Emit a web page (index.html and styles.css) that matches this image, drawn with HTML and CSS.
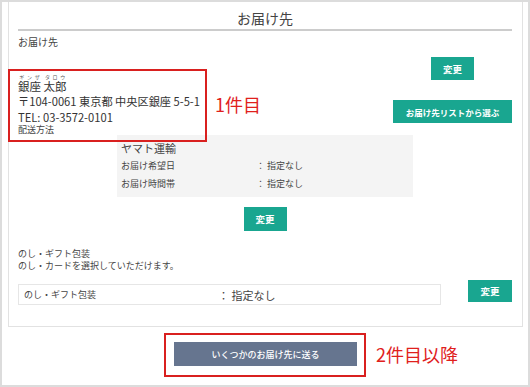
FILE: index.html
```html
<!DOCTYPE html>
<html lang="ja">
<head>
<meta charset="utf-8">
<title>お届け先</title>
<link rel="stylesheet" href="styles.css">
</head>
<body>
<div class="frame">
  <section class="card">
    <h2 class="card-title">お届け先</h2>
    <div class="label">お届け先</div>
    <div class="top-row">
      <div class="addr-wrap">
        <div class="addr">
          <div class="name"><ruby>銀座<rt>ギンザ</rt></ruby> <ruby>太郎<rt>タロウ</rt></ruby></div>
          <div class="line">〒104-0061 東京都 中央区銀座 5-5-1</div>
          <div class="line">TEL: 03-3572-0101</div>
          <div class="method">配送方法</div>
        </div>
        <div class="note">1件目</div>
      </div>
      <div class="btn-col">
        <button class="btn btn-small">変更</button>
        <button class="btn btn-list">お届け先リストから選ぶ</button>
      </div>
    </div>
    <div class="ship">
      <div class="ship-title">ヤマト運輸</div>
      <div class="ship-row"><span class="k">お届け希望日</span><span class="v">： 指定なし</span></div>
      <div class="ship-row"><span class="k">お届け時間帯</span><span class="v">： 指定なし</span></div>
    </div>
    <div class="center">
      <button class="btn btn-small btn-mid">変更</button>
    </div>
    <div class="gift-text">
      <div>のし・ギフト包装</div>
      <div>のし・カードを選択していただけます。</div>
    </div>
    <div class="gift-row">
      <div class="gift-box"><span class="gk">のし・ギフト包装</span><span class="gv">： 指定なし</span></div>
      <button class="btn btn-small btn-gift">変更</button>
    </div>
  </section>
  <div class="bottom">
    <div class="multi-box">
      <button class="btn-multi">いくつかのお届け先に送る</button>
    </div>
    <div class="note note2">2件目以降</div>
  </div>
</div>
</body>
</html>
```

FILE: styles.css
```css
* { box-sizing: border-box; }
html, body { margin: 0; padding: 0; background: #fff; }
body {
  font-family: "Noto Sans CJK JP", "Noto Sans", sans-serif;
  color: #444;
}
.frame {
  width: 530px;
  height: 387px;
  border: 2px solid #dcdcdc;
  display: flex;
  flex-direction: column;
}
.card {
  margin: 0 5px 0 6px;
  border: 1px solid #e2e2e2;
  border-top: 0;
  padding: 0 10px 21px 9px;
}
.card-title {
  margin: 6px 0 0;
  font-size: 14px;
  font-weight: 400;
  line-height: 21px;
  text-align: center;
  color: #444;
  border-bottom: 2px solid #cccccc;
}
.label {
  margin-top: 4px;
  font-size: 10px;
  line-height: 14px;
  color: #444;
}
.top-row {
  display: flex;
  justify-content: space-between;
  align-items: flex-start;
}
.addr-wrap {
  margin-top: 24px;
  display: flex;
  align-items: center;
}
.addr {
  position: relative;
  color: #333;
  font-size: 11.2px;
  line-height: 15.5px;
}
.addr::after {
  content: "";
  position: absolute;
  top: -4px;
  left: -10px;
  right: -7px;
  bottom: -7px;
  border: 2px solid #d9201f;
  pointer-events: none;
}
.name {
  padding-top: 6px;
  line-height: 15px;
  font-size: 11.5px;
}
.name rt {
  font-size: 5px;
  line-height: 6px;
  color: #555;
}
.line { white-space: nowrap; }
.method {
  font-size: 9px;
  line-height: 10px;
  color: #444;
}
.note {
  margin-left: 15px;
  color: #e0201c;
  font-size: 18px;
  line-height: 24px;
}
.btn-col {
  width: 119px;
  display: flex;
  flex-direction: column;
  align-items: center;
  gap: 20px;
  margin-top: 8px;
}
.btn {
  border: 0;
  padding: 0;
  background: #19a690;
  color: #fff;
  font-family: inherit;
  font-weight: 700;
  font-size: 8.5px;
  cursor: pointer;
}
.btn-small { width: 43px; height: 23px; font-size: 9.5px; }
.btn-list { width: 119px; height: 23px; }
.ship {
  width: 296px;
  margin: 0 auto;
  background: #f4f4f4;
  padding: 5px 4px;
}
.ship-title {
  font-size: 11px;
  line-height: 16px;
  margin-bottom: 1px;
  color: #444;
}
.ship-row {
  display: flex;
  font-size: 9px;
  line-height: 17.5px;
  color: #444;
}
.ship-row .k { width: 135px; }
.center {
  display: flex;
  justify-content: center;
  margin-top: 10px;
}
.btn-mid { height: 24px; }
.gift-text {
  margin-top: 17px;
  font-size: 9px;
  line-height: 12px;
  color: #444;
}
.gift-row {
  margin-top: 8px;
  display: flex;
  justify-content: space-between;
  align-items: flex-start;
}
.gift-box {
  width: 423px;
  height: 21px;
  margin-top: 4px;
  border: 1px solid #e6e6e6;
  display: flex;
  align-items: center;
  padding-left: 5px;
}
.gk { width: 194px; font-size: 9px; color: #444; }
.gv { font-size: 11px; color: #444; }
.btn-gift { width: 44px; height: 22px; }
.bottom {
  margin-top: 6px;
  display: grid;
  grid-template-columns: 1fr auto 1fr;
  align-items: center;
}
.multi-box {
  grid-column: 2;
  border: 2px solid #d9201f;
  padding: 7px 7px 9px 8px;
}
.btn-multi {
  display: block;
  width: 183px;
  height: 24px;
  border: 0;
  background: #66758f;
  color: #fff;
  font-family: inherit;
  font-size: 9px;
  font-weight: 500;
  cursor: pointer;
}
.note2 {
  margin-left: 10px;
  justify-self: start;
  margin-top: -3px;
}
```
